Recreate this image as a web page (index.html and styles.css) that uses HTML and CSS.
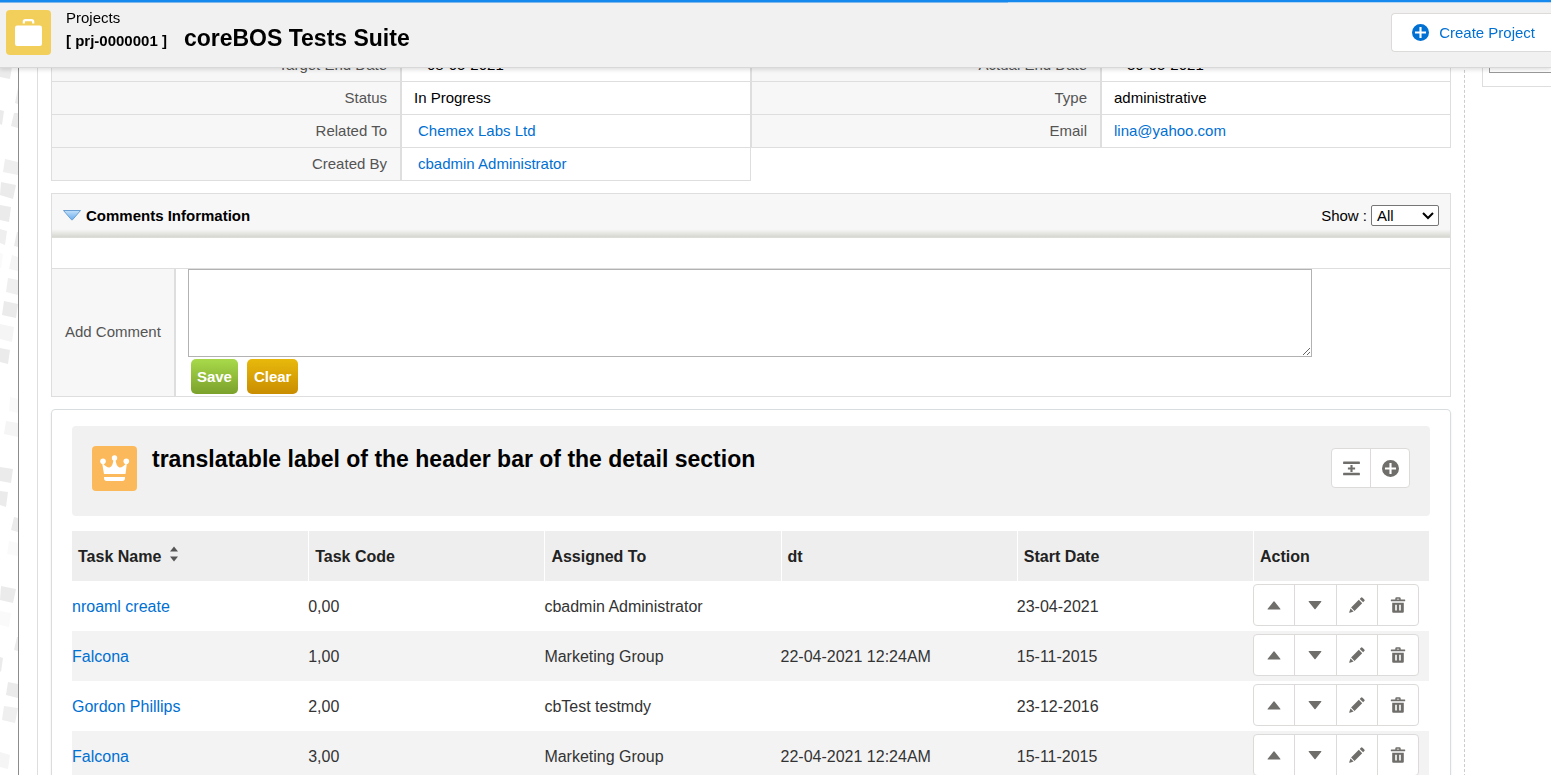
FILE: index.html
```html
<!DOCTYPE html>
<html lang="en">
<head>
<meta charset="utf-8">
<title>coreBOS Tests Suite</title>
<link rel="stylesheet" href="styles.css">
</head>
<body>
<svg class="sprite" aria-hidden="true">
  <symbol id="i-up" viewBox="0 0 16 16"><path d="M1.700 11.800 7.500 4.500q.5-.6 1 0l5.800 7.300q.4.700-.4.700H2.100q-.8 0-.4-.700z"/></symbol>
  <symbol id="i-down" viewBox="0 0 16 16"><path d="M1.700 4.700 7.500 12q.5.600 1 0l5.800-7.300q.4-.700-.4-.700H2.100q-.8 0-.4.700z"/></symbol>
  <symbol id="i-edit" viewBox="0 0 16 16"><path d="M2.100 10.500 9.800 2.800l3.400 3.400-7.700 7.700zM10.700 1.900l1.200-1.200q.8-.8 1.600 0l1.800 1.800q.8.800 0 1.600l-1.200 1.200zM1.500 11.400l3.100 3.100-3.700 1.200q-.8.200-.6-.6z"/></symbol>
  <symbol id="i-delete" viewBox="0 0 16 16"><path fill-rule="evenodd" d="M5.300 2.500V1.600Q5.300.300 6.600.300h2.800q1.300 0 1.300 1.300v.9h4q.5 0 .5.500v.8q0 .5-.5.500H1.300q-.5 0-.5-.5V3q0-.5.500-.5zM6.800 2.500h2.400V1.700H6.800zM2.200 5.700h11.600v9q0 1.100-1.100 1.100H3.300q-1.100 0-1.100-1.100zM5.200 7.700v5.800h1.600V7.700zm4 0v5.800h1.600V7.700z"/></symbol>
  <symbol id="i-plus" viewBox="0 0 16 16"><path fill-rule="evenodd" d="M8 0a8 8 0 1 1 0 16A8 8 0 0 1 8 0zM7 2.800V7H2.800v2H7v4.200h2V9h4.200V7H9V2.800z"/></symbol>
  <symbol id="i-insert" viewBox="0 0 16 16"><path d="M.6 1.500h14.800q.5 0 .5.500v1.200q0 .5-.5.500H.6q-.5 0-.5-.5V2q0-.5.500-.5zM.6 12.100h14.800q.5 0 .5.500v1.200q0 .5-.5.500H.6q-.5 0-.5-.5v-1.200q0-.5.500-.5zM7 4.700h2V7h2.400v2H9v2.200H7V9H4.600V7H7z"/></symbol>
</svg>

<header class="topbar">
  <span class="badge badge-project">
    <svg width="45" height="45" viewBox="0 0 45 45"><path fill="none" stroke="#fff" stroke-width="2.200" d="M17.800 13.500v-1.700q0-1.700 1.700-1.700h6q1.700 0 1.700 1.700v1.700"/><rect x="9" y="15.500" width="27" height="20.500" rx="2.200" fill="#fff"/></svg>
  </span>
  <div class="titles">
    <span class="module">Projects</span>
    <h1 class="record"><span class="code">[ prj-0000001 ]</span><span class="heading">coreBOS Tests Suite</span></h1>
  </div>
  <button class="create" type="button"><svg class="icon"><use href="#i-plus"/></svg>Create Project</button>
</header>

<div class="page">
  <svg class="pattern" aria-hidden="true">
    <g fill="#ebebeb">
      <path d="M0 66l12 1-2 12-10-2zM18 88v16l-3-1zM0 110l4 1-2 14-2-1zM14 113l4 0v15l-7-2zM1 182l15 3-3 14-13-4zM0 205l11 2-2 15-9-2zM17 232l1 0v15l-4-1zM4 301l14 3-2 14-14-3zM0 348l10 2-2 14-8-2zM0 467l13 2-2 14-11-2zM0 491l8 1-2 15-6-2zM14 517l4 1v14l-7-2zM1 586l15 3-3 14-13-3zM17 637l1 0v14l-4-1zM0 657l3 1-2 14-1-1zM8 682l10 2v14l-12-3z"/>
    </g>
    <g fill="#efefef"><path d="M5 159l13 3v13l-15-3zM0 229l7 2-2 14-5-2zM8 278l10 2v15l-12-3zM4 706l14 2-3 15-13-3z"/></g>
    <g fill="#f5f5f5"><path d="M12 255l6 2v14l-9-2zM0 324l14 3-2 15-12-3zM6 421l12 2v14l-14-3zM0 752l10 3-2 14-8-2z"/></g>
    <g fill="#fafafa"><path d="M0 253l3 1-2 14-1 0zM10 397l8 2v14l-9-2zM9 541l9 2v13l-11-2zM0 611l11 2-2 14-9-2z"/></g>
  </svg>

  <main class="content">
    <table class="fields">
      <tr><th>Target End Date</th><td class="date">08-05-2021</td><th>Actual End Date</th><td class="date">30-05-2021</td></tr>
      <tr><th>Status</th><td>In Progress</td><th>Type</th><td>administrative</td></tr>
      <tr><th>Related To</th><td class="inset"><a href="#">Chemex Labs Ltd</a></td><th>Email</th><td><a href="#">lina@yahoo.com</a></td></tr>
      <tr><th>Created By</th><td class="inset"><a href="#">cbadmin Administrator</a></td></tr>
    </table>

    <section class="comments">
      <div class="comments-head">
        <svg width="18" height="12" viewBox="0 0 18 12"><defs><linearGradient id="tri" x2="0" y2="1"><stop offset="0" stop-color="#c4e0fa"/><stop offset="1" stop-color="#6aaeee"/></linearGradient></defs><path d="M.5.500h17L9.500 9.800h-1z" fill="url(#tri)" stroke="#6a9fd4"/></svg>
        <h2 class="comments-title">Comments Information</h2>
        <label class="show" for="show">Show :</label>
        <select id="show" class="show-select"><option>All</option><option>Last 5</option></select>
      </div>
      <div class="comments-list"></div>
      <div class="comment-form">
        <label class="comment-label" for="comment">Add Comment</label>
        <div class="comment-body">
          <textarea id="comment" class="comment-text"></textarea>
          <div class="comment-actions">
            <button class="btn save" type="button">Save</button>
            <button class="btn clear" type="button">Clear</button>
          </div>
        </div>
      </div>
    </section>

    <section class="card">
      <div class="card-head">
        <span class="badge badge-detail">
          <svg width="45" height="45" viewBox="0 0 45 45" fill="#fff"><circle cx="11" cy="15.300" r="2.800"/><circle cx="22.500" cy="12" r="2.700"/><circle cx="34.300" cy="15.300" r="2.800"/><path d="M10 16.500q4.700 5.500 7.500 5 3.600-1.300 4-8.500h2q.4 7.200 4 8.500 2.800.5 7.500-5L33.500 28H12zM12 31h21v1q0 3-2.700 3H14.700Q12 35 12 32z"/></svg>
        </span>
        <h2 class="heading">translatable label of the header bar of the detail section</h2>
        <div class="group">
          <button class="tool" type="button" aria-label="Insert row"><svg class="icon"><use href="#i-insert"/></svg></button>
          <button class="tool" type="button" aria-label="Add"><svg class="icon"><use href="#i-plus"/></svg></button>
        </div>
      </div>
      <table class="tasks">
        <colgroup><col span="5" class="col-data"><col class="col-action"></colgroup>
        <thead><tr><th>Task Name<svg class="sort" viewBox="0 0 10 16"><path d="M1 5.500 5 .5l4 5zM1 10.500h8l-4 5z"/></svg></th><th>Task Code</th><th>Assigned To</th><th>dt</th><th>Start Date</th><th>Action</th></tr></thead>
        <tbody id="rows"></tbody>
      </table>
    </section>
  </main>

  <aside class="side"><div class="side-panel"><div class="side-box"></div></div></aside>
</div>
<script src="app.js"></script>
</body>
</html>
```
FILE: styles.css
```css
* { box-sizing: border-box; }
body { margin: 0; height: 100vh; overflow: hidden; background: #fff; color: #000; font: 15px/20px "Liberation Sans", Arial, sans-serif; }
h1, h2 { margin: 0; }
button, select, textarea { font: inherit; }
a { color: #0070d2; text-decoration: none; }
.sprite { position: absolute; width: 0; height: 0; }

.topbar { position: fixed; inset: 0 0 auto 0; z-index: 2; display: flex; align-items: flex-start; height: 68px; padding: 8px 0 0 6px; border-top: 2px solid #1589ee; border-bottom: 1px solid #d8d8d8; background: linear-gradient(90deg, #7fb8ea 65%, #b4d4ef 65%) top / 100% 1px no-repeat #f1f1f1; box-shadow: 0 2px 4px rgba(0, 0, 0, .12); }
.badge { display: block; width: 45px; height: 45px; border-radius: 4px; }
.badge svg { display: block; }
.badge-project { background: #f2cf5b; }
.badge-detail { background: #fcb95b; }
.titles { margin-left: 15px; }
.module { display: block; line-height: 16px; }
.record { display: flex; align-items: baseline; gap: 17px; line-height: 24px; }
.code { font-size: 15px; }
.heading { font-size: 23px; line-height: 26px; font-weight: 700; }
.record .heading { line-height: 24px; }
.create { display: flex; align-items: center; gap: 10px; height: 39px; margin: 3px 0 0 auto; padding: 0 16px 0 20px; border: 1px solid #dddbda; border-right: 0; border-radius: 4px 0 0 4px; background: #fff; color: #0070d2; }

.page { display: flex; min-height: 100vh; }
.pattern { flex: none; width: 19px; height: 100vh; border-right: 1px solid #8c8c8c; }
.content { flex: 1; margin-left: 18px; padding: 49px 13px 0; border-left: 1px solid #dedede; border-right: 1px dashed #ccc; }

.fields { width: 100%; table-layout: fixed; border-spacing: 0; }
.fields th, .fields td { height: 33px; padding: 0 13px; border: 1px solid #dedede; border-top: 0; font-weight: 400; }
.fields th { background: #f7f7f7; color: #545454; text-align: right; }
.fields td { padding-left: 12px; }
.fields td.inset { padding-left: 16px; }
.fields td.date { padding-left: 25px; }

.comments { margin-top: 12px; border: 1px solid #dedede; }
.comments-head { display: flex; align-items: center; height: 44px; padding: 0 11px; border-bottom: 1px solid #dcdcd8; background: linear-gradient(#f7f7f7 82%, #d6d7d0); }
.comments-title { margin-left: 5px; font-size: 15px; }
.show { margin: 0 4px 0 auto; }
.show-select { appearance: none; width: 68px; height: 21px; padding: 0 5px; border: 1px solid #767676; border-radius: 2px; background: #fff url("data:image/svg+xml,%3Csvg xmlns='http://www.w3.org/2000/svg' width='12' height='8'%3E%3Cpath d='M1 1l5 5 5-5' fill='none' stroke='%23000' stroke-width='2'/%3E%3C/svg%3E") right 4px center no-repeat; color: #000; line-height: 19px; }
.comments-list { height: 30px; }
.comment-form { display: flex; border-top: 1px solid #dedede; }
.comment-label { display: flex; align-items: center; padding: 0 13px 2px; border-right: 2px solid #dedede; background: #f7f7f7; color: #545454; }
.comment-body { flex: 1; padding: 0 13px 0 12px; }
.comment-text { display: block; width: 90%; height: 88px; border: 1px solid #b2b2b2; background: #fff; }
.comment-actions { display: flex; gap: 9px; padding: 2px 3px; }
.btn { height: 35px; padding: 0 6px; border: 0; border-radius: 5px; color: #fff; font-weight: 700; }
.save { background: linear-gradient(#a8d94a, #7ba12b); }
.clear { padding: 0 7px; background: linear-gradient(#e8b90c, #c98d00); }

.card { margin-top: 12px; padding: 16px 20px 20px; border: 1px solid #d8dde0; border-radius: 4px; box-shadow: 0 2px 2px rgba(0, 0, 0, .1); }
.card-head { display: flex; align-items: flex-start; height: 90px; padding: 20px; border-radius: 4px; background: #f1f1f1; }
.card-head .heading { margin-left: 15px; }
.group { display: flex; border: 1px solid #dddbda; border-radius: 4px; background: #fff; }
.card-head .group { width: 79px; margin: 2px 0 0 auto; }
.tool { display: flex; flex: 1; align-items: center; justify-content: center; height: 40px; padding: 0; border: 0; background: none; }
.tool + .tool { border-left: 1px solid #dddbda; }
.card-head .tool { height: 38px; }
.icon { width: 17px; height: 17px; fill: #706e6b; }
.create .icon { fill: #0070d2; }
.icon-small { width: 16px; height: 16px; fill: #706e6b; }

.tasks { width: calc(100% - 1px); margin-top: 15px; table-layout: fixed; border-spacing: 0; font-size: 16px; color: #333; }
.col-action { width: 176px; }
.tasks th { height: 50px; padding: 2px 6px 0; border-left: 1px solid #fff; background: #eee; color: #222; text-align: left; }
.tasks th:first-child { padding-top: 0; border-left: 0; }
.tasks td { height: 50px; padding: 2px 0 0; }
.tasks td:last-child { padding-top: 0; }
.tasks tr:nth-child(even) td { background: #f3f3f3; }
.tasks td .group { width: 166px; margin-bottom: 2px; }
.sort { width: 10px; height: 16px; margin-left: 8px; fill: #555; }

.side { flex: none; width: 86px; padding: 49px 0 0 17px; overflow: hidden; }
.side-panel { height: 38px; padding-left: 6px; border: 1px solid #dedede; border-width: 0 0 1px 1px; }
.side-box { height: 24px; border: 1px solid #999; border-width: 0 0 1px 1px; }
```
FILE: app.js
```js
const rows = [
  ["nroaml create", "0,00", "cbadmin Administrator", "", "23-04-2021"],
  ["Falcona", "1,00", "Marketing Group", "22-04-2021 12:24AM", "15-11-2015"],
  ["Gordon Phillips", "2,00", "cbTest testmdy", "", "23-12-2016"],
  ["Falcona", "3,00", "Marketing Group", "22-04-2021 12:24AM", "15-11-2015"]
];
const tools = [["up", "Move up"], ["down", "Move down"], ["edit", "Edit"], ["delete", "Delete"]]
  .map(([id, label]) => `<button class="tool" type="button" aria-label="${label}"><svg class="icon-small"><use href="#i-${id}"/></svg></button>`)
  .join("");
document.getElementById("rows").innerHTML = rows
  .map(([name, ...rest]) => `<tr><td><a href="#">${name}</a></td>${rest.map(v => `<td>${v}</td>`).join("")}<td><div class="group">${tools}</div></td></tr>`)
  .join("");
```
